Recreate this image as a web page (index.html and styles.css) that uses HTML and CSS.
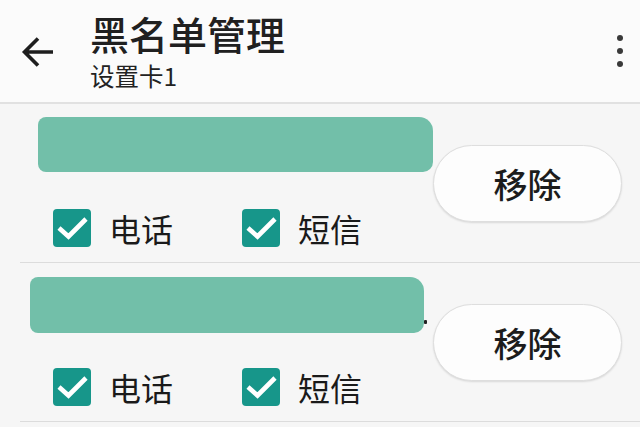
FILE: index.html
```html
<!DOCTYPE html>
<html lang="zh-CN">
<head>
<meta charset="utf-8">
<title>黑名单管理</title>
<link rel="stylesheet" href="styles.css">
</head>
<body>
<header class="appbar">
  <div class="back">
    <svg width="34" height="34" viewBox="0 0 34 34"><path d="M32 17H4M17 3.5L3.5 17L17 30.5" fill="none" stroke="#1e1e1e" stroke-width="3.6" stroke-linecap="butt"/></svg>
  </div>
  <div class="titles">
    <div class="title">黑名单管理</div>
    <div class="subtitle">设置卡1</div>
  </div>
  <div class="more"><span></span><span></span><span></span></div>
</header>
<main class="list">
  <div class="item">
    <div class="info">
      <div class="bar bar1"></div>
      <div class="checks checks1">
        <label class="check"><span class="box"><svg width="38" height="38" viewBox="0 0 38 38"><path d="M6 19L15.5 27.5L33 10" fill="none" stroke="#fff" stroke-width="4.6"/></svg></span><span class="label">电话</span></label>
        <label class="check"><span class="box"><svg width="38" height="38" viewBox="0 0 38 38"><path d="M6 19L15.5 27.5L33 10" fill="none" stroke="#fff" stroke-width="4.6"/></svg></span><span class="label">短信</span></label>
      </div>
    </div>
    <button class="remove">移除</button>
  </div>
  <div class="item">
    <div class="info">
      <div class="bar bar2"><i class="speck"></i></div>
      <div class="checks checks2">
        <label class="check"><span class="box"><svg width="38" height="38" viewBox="0 0 38 38"><path d="M6 19L15.5 27.5L33 10" fill="none" stroke="#fff" stroke-width="4.6"/></svg></span><span class="label">电话</span></label>
        <label class="check"><span class="box"><svg width="38" height="38" viewBox="0 0 38 38"><path d="M6 19L15.5 27.5L33 10" fill="none" stroke="#fff" stroke-width="4.6"/></svg></span><span class="label">短信</span></label>
      </div>
    </div>
    <button class="remove">移除</button>
  </div>
</main>
</body>
</html>
```
FILE: styles.css
```css
* { box-sizing: border-box; }
html, body { margin: 0; padding: 0; }
body {
  width: 640px;
  height: 427px;
  overflow: hidden;
  background: #f6f6f6;
  font-family: "Noto Sans CJK SC", "Noto Sans", sans-serif;
  color: #1c1c1c;
}
.appbar {
  height: 104px;
  background: #fbfbfb;
  border-bottom: 2px solid #e1e1e1;
  display: flex;
  align-items: flex-start;
}
.back {
  margin-left: 21px;
  margin-top: 35px;
  width: 34px;
  height: 34px;
  display: flex;
}
.titles {
  margin-left: 35px;
  display: flex;
  flex-direction: column;
}
.title {
  font-size: 39px;
  font-weight: 500;
  line-height: 44px;
  margin-top: 11px;
  color: #202020;
  letter-spacing: 0;
}
.subtitle {
  font-size: 24.5px;
  line-height: 30px;
  margin-top: 6px;
  color: #222;
}
.more {
  margin-left: auto;
  margin-right: 17px;
  margin-top: 35px;
  display: flex;
  flex-direction: column;
  gap: 7px;
}
.more span {
  width: 6px;
  height: 6px;
  border-radius: 50%;
  background: #3a3a3a;
}
.list { display: flex; flex-direction: column; }
.item {
  height: 159px;
  margin-left: 20px;
  border-bottom: 1px solid #dcdcdc;
  display: flex;
  align-items: center;
}
.info {
  align-self: stretch;
  display: flex;
  flex-direction: column;
}
.bar {
  background: #72bfa9;
  border-radius: 8px 14px 10px 8px;
  position: relative;
}
.bar1 { margin-top: 13px; margin-left: 18px; width: 395px; height: 55px; }
.bar2 { margin-top: 14px; margin-left: 10px; width: 394px; height: 56px; }
.speck {
  position: absolute;
  right: -3px;
  top: 43px;
  width: 3px;
  height: 4px;
  background: #222;
  border-radius: 1px;
}
.checks {
  display: flex;
  align-items: center;
  padding-left: 33px;
}
.checks1 { margin-top: 37px; }
.checks2 { margin-top: 35px; }
.check {
  display: flex;
  align-items: center;
  width: 189px;
}
.box {
  width: 38px;
  height: 38px;
  border-radius: 4px;
  background: #17968a;
  display: flex;
}
.label {
  margin-left: 18px;
  font-size: 32px;
  line-height: 38px;
  color: #1a1a1a;
}
.remove {
  margin-left: auto;
  margin-right: 18px;
  width: 189px;
  height: 77px;
  border-radius: 39px;
  background: #fdfdfd;
  border: 1.5px solid #dedede;
  box-shadow: 0 1px 2px rgba(0,0,0,0.12);
  font-family: "Noto Sans CJK SC", sans-serif;
  font-size: 34px;
  font-weight: 500;
  color: #1c1c1c;
  padding: 0;
  display: flex;
  align-items: center;
  justify-content: center;
}
```
